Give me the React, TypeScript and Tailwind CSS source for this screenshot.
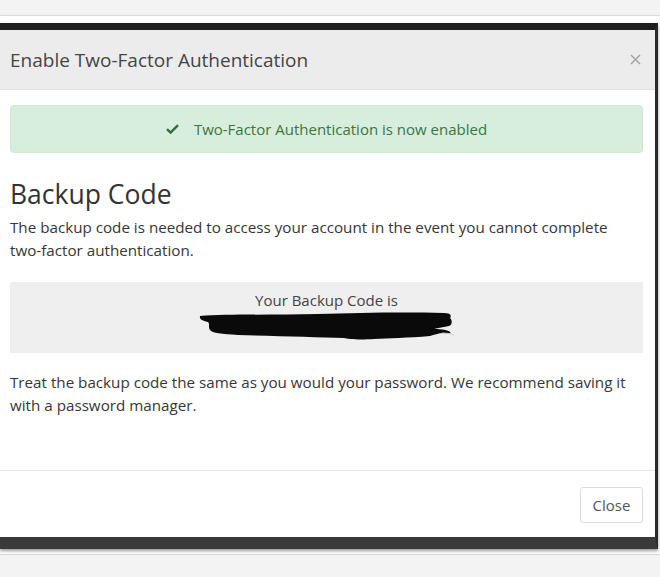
import React from "react"

function CheckIcon() {
  return (
    <svg width="13" height="10" viewBox="0 0 13 10" className="shrink-0">
      <path d="M1 5.2 L4.6 8.6 L12 1.2" fill="none" stroke="#2f6d3c" strokeWidth="2.4" strokeLinejoin="miter" />
    </svg>
  )
}

function CloseX() {
  return (
    <svg width="11" height="11" viewBox="0 0 11 11">
      <path d="M1 1 L10 10 M10 1 L1 10" stroke="#a6a6a6" strokeWidth="1.6" />
    </svg>
  )
}

// hand-drawn black marker over the code
function Redaction() {
  return (
    <svg width="258" height="30" viewBox="0 0 258 30" className="mx-auto block">
      <path
        d="M2 4 C30 2 80 3 120 2 C160 1 200 0 246 1 C252 1 254 3 252 6 C254 8 255 12 251 14 C246 15 240 16 236 17 C244 17 250 18 252 20 C254 22 250 22 246 21 C240 21 236 23 232 24 C210 26 190 26 176 27 C160 28 150 27 146 26 C120 25 80 24 40 23 C24 22 14 21 12 18 C10 15 12 12 10 10 C6 9 1 8 2 4 Z"
        fill="#0a0a0a"
      />
      <path d="M244 21 C250 21 254 22 256 23" stroke="#cfcfcf" strokeWidth="1.2" fill="none" />
    </svg>
  )
}

export default function App() {
  return (
    <div
      className="h-[577px] w-[660px] overflow-hidden bg-[#f3f3f3] flex flex-col text-[#363636]"
      style={{ fontFamily: '"Open Sans", "Noto Sans", sans-serif' }}
    >
      <div className="h-[16px] shrink-0 border-b border-[#dedede]" />
      <div className="bg-white pt-[7px] pb-[5px] shrink-0">
        <div className="mr-[2px] border-t-[7px] border-b-[12px] border-r-[3px] border-t-[#1e1e1e] border-b-[#3a3a3a] border-r-[#2a2a2a] bg-white shadow-[0_2px_3px_rgba(0,0,0,0.4)]">
          <div className="h-[60px] bg-[#ececec] border-b border-[#e2e2e2] flex items-center justify-between pl-[10px] pr-[14px]">
            <h2 className="text-[19px] text-[#454545] leading-none pt-[2px]">Enable Two-Factor Authentication</h2>
            <CloseX />
          </div>

          <div className="pl-[10px] pr-[12px] pt-[15px] pb-[53px] border-b border-[#e8e8e8]">
            <div className="h-[48px] rounded-[4px] bg-[#d7eedd] border border-[#cde8d3] flex items-center justify-center gap-[15px] text-[15px] text-[#3d7443]">
              <CheckIcon />
              <span>Two-Factor Authentication is now enabled</span>
            </div>

            <h1 className="mt-[26px] text-[26.5px] leading-[30px] text-[#333]">Backup Code</h1>
            <p className="mt-[7px] max-w-[624px] text-[15.2px] leading-[23px]">
              The backup code is needed to access your account in the event you cannot complete two-factor authentication.
            </p>

            <div className="mt-[20px] h-[71px] bg-[#efefef] flex flex-col items-center pt-[7px]">
              <span className="text-[15px] leading-[23px] text-[#444]">Your Backup Code is</span>
              <Redaction />
            </div>

            <p className="mt-[18px] max-w-[624px] text-[15.2px] leading-[23px]">
              Treat the backup code the same as you would your password. We recommend saving it with a password manager.
            </p>
          </div>

          <div className="h-[66px] flex items-start justify-end pt-[16px] pr-[12px]">
            <button className="h-[36px] w-[63px] rounded-[3px] border border-[#dcdcdc] bg-white text-[15px] text-[#555]">
              Close
            </button>
          </div>
        </div>
      </div>
      <div className="border-t border-[#d6d6d6] flex-1" />
    </div>
  )
}
